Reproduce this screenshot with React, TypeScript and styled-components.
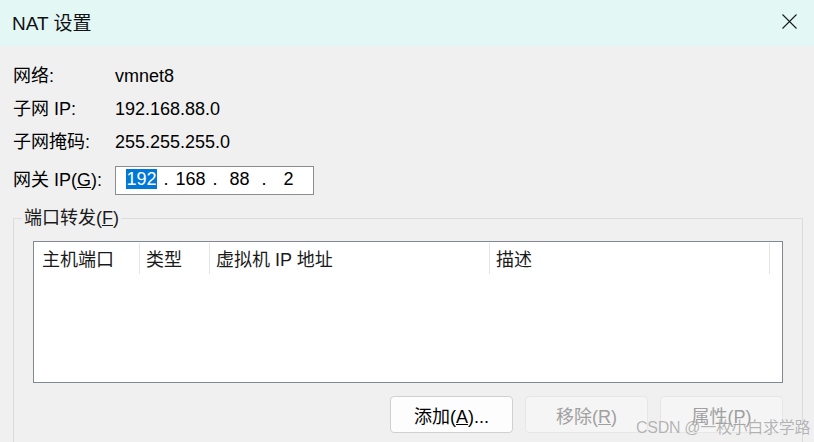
import React from 'react';
import styled, { createGlobalStyle } from 'styled-components';

const Global = createGlobalStyle`
  html, body { margin: 0; padding: 0; background: #f0f0f0; overflow: hidden; }
  body { font-family: "Liberation Sans", "Noto Sans CJK SC", sans-serif; }
`;

const Window = styled.div`
  position: relative;
  width: 814px;
  height: 442px;
  overflow: hidden;
  background: #f0f0f0;
  color: #000;
  font-size: 18px;
  display: flex;
  flex-direction: column;
`;

const TitleBar = styled.div`
  height: 46px;
  flex: none;
  box-sizing: border-box;
  background: #e3f7f5;
  display: flex;
  align-items: center;
  justify-content: space-between;
  padding: 0 17px 4px 12px;
`;

const Title = styled.div`
  font-size: 19px;
  color: #111;
`;

const CloseBtn = styled.svg`
  width: 15px;
  height: 15px;
  display: block;
`;

const InfoGrid = styled.div`
  display: grid;
  grid-template-columns: 102px auto;
  grid-template-rows: 33px 33px 34px 36px;
  padding: 13px 0 0 13px;
  align-items: center;
`;

const Label = styled.div`
  line-height: 22px;
`;

const Value = styled.div`
  line-height: 22px;
`;

const FieldLabel = styled.div`
  align-self: end;
  line-height: 29px;
`;

const IpField = styled.div`
  align-self: end;
  width: 199px;
  height: 29px;
  box-sizing: border-box;
  border: 1px solid #8d8d8d;
  background: #fff;
  display: flex;
  align-items: flex-start;
  padding-left: 6px;
`;

const Octet = styled.span`
  width: 39px;
  text-align: center;
  line-height: 24px;
`;

const Selected = styled.span`
  background: #0078d7;
  color: #fff;
`;

const Dot = styled.span`
  width: 10px;
  text-align: center;
  line-height: 24px;
`;

const Group = styled.fieldset`
  margin: 12px 11px 0 13px;
  padding: 0 0 20px 8px;
  border: 1px solid #dcdcdc;
  min-width: 0;
`;

const Legend = styled.legend`
  padding: 0 2px;
  line-height: 22px;
  color: #1a1a1a;
`;

const GroupBody = styled.div`
  padding: 12px 19px 0 11px;
  display: flex;
  flex-direction: column;
`;

const ListView = styled.div`
  height: 142px;
  box-sizing: border-box;
  border: 1px solid #828790;
  background: #fff;
`;

const Header = styled.div`
  display: flex;
  height: 31px;
  padding-top: 1px;
`;

const HeaderCell = styled.div<{ $w: number; $pad: number }>`
  width: ${p => p.$w}px;
  box-sizing: border-box;
  border-right: 1px solid #e5e5e5;
  padding-left: ${p => p.$pad}px;
  padding-top: 5px;
  line-height: 24px;
  color: #1a1a1a;
  white-space: nowrap;
`;

const ButtonRow = styled.div`
  display: flex;
  justify-content: flex-end;
  gap: 12px;
  margin-top: 13px;
`;

const Button = styled.button<{ $disabled?: boolean }>`
  width: 123px;
  height: 37px;
  border-radius: 4px;
  font-family: inherit;
  font-size: 18px;
  padding: 0;
  border: 1px solid ${p => (p.$disabled ? '#e6e6e6' : '#d0d0d0')};
  background: ${p => (p.$disabled ? '#f5f5f5' : '#fdfdfd')};
  color: ${p => (p.$disabled ? '#a0a0a0' : '#000')};
`;

const Watermark = styled.div`
  position: absolute;
  left: 636px;
  top: 414px;
  font-size: 16px;
  letter-spacing: -0.3px;
  color: rgba(120, 120, 120, 0.55);
  text-shadow: 0 0 1px rgba(255, 255, 255, 0.6);
  white-space: nowrap;
  pointer-events: none;
`;

export default function App() {
  return (
    <>
      <Global />
      <Window>
        <TitleBar>
          <Title>NAT 设置</Title>
          <CloseBtn viewBox="0 0 15 15">
            <path d="M0.5 0.5 L14.5 14.5 M14.5 0.5 L0.5 14.5" stroke="#1a1a1a" strokeWidth="1.1" fill="none" />
          </CloseBtn>
        </TitleBar>
        <InfoGrid>
          <Label>网络:</Label>
          <Value>vmnet8</Value>
          <Label>子网 IP:</Label>
          <Value>192.168.88.0</Value>
          <Label>子网掩码:</Label>
          <Value>255.255.255.0</Value>
          <FieldLabel>
            网关 IP(<u>G</u>):
          </FieldLabel>
          <IpField>
            <Octet>
              <Selected>192</Selected>
            </Octet>
            <Dot>.</Dot>
            <Octet>168</Octet>
            <Dot>.</Dot>
            <Octet>88</Octet>
            <Dot>.</Dot>
            <Octet>2</Octet>
          </IpField>
        </InfoGrid>
        <Group>
          <Legend>
            端口转发(<u>F</u>)
          </Legend>
          <GroupBody>
            <ListView>
              <Header>
                <HeaderCell $w={106} $pad={8}>主机端口</HeaderCell>
                <HeaderCell $w={70} $pad={6}>类型</HeaderCell>
                <HeaderCell $w={280} $pad={6}>虚拟机 IP 地址</HeaderCell>
                <HeaderCell $w={280} $pad={6}>描述</HeaderCell>
              </Header>
            </ListView>
            <ButtonRow>
              <Button>
                添加(<u>A</u>)...
              </Button>
              <Button $disabled>
                移除(<u>R</u>)
              </Button>
              <Button $disabled>
                属性(<u>P</u>)
              </Button>
            </ButtonRow>
          </GroupBody>
        </Group>
        <Watermark>CSDN @一枚小白求学路</Watermark>
      </Window>
    </>
  );
}
